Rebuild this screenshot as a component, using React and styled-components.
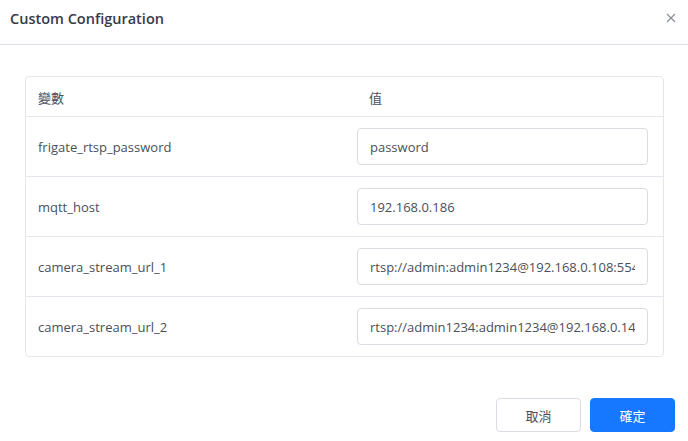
import React from "react"
import styled, { createGlobalStyle } from "styled-components"

const rows = [
  { name: "frigate_rtsp_password", value: "password" },
  { name: "mqtt_host", value: "192.168.0.186" },
  { name: "camera_stream_url_1", value: "rtsp://admin:admin1234@192.168.0.108:554/cam/realmonitor" },
  { name: "camera_stream_url_2", value: "rtsp://admin1234:admin1234@192.168.0.140:554/stream" },
]

const App = () => (
  <>
    <GlobalStyle />
    <Dialog>
      <Header>
        <Title>Custom Configuration</Title>
        <CloseButton aria-label="close">
          <svg width="10" height="10" viewBox="0 0 10 10">
            <path d="M1 1L9 9M9 1L1 9" stroke="#8a8f99" strokeWidth="1.2" fill="none" />
          </svg>
        </CloseButton>
      </Header>
      <Body>
        <Table>
          <HeadRow>
            <NameCell>變數</NameCell>
            <ValueCell head>值</ValueCell>
          </HeadRow>
          {rows.map((r) => (
            <Row key={r.name}>
              <NameCell>{r.name}</NameCell>
              <ValueCell>
                <Input defaultValue={r.value} />
              </ValueCell>
            </Row>
          ))}
        </Table>
      </Body>
      <Footer>
        <Button>取消</Button>
        <Button primary>確定</Button>
      </Footer>
    </Dialog>
  </>
)

const GlobalStyle = createGlobalStyle`
  body {
    margin: 0;
    background: #fff;
    font-family: "Open Sans", "Noto Sans CJK TC", sans-serif;
  }
`

const Dialog = styled.div`
  width: 688px;
  height: 441px;
  background: #fff;
  display: flex;
  flex-direction: column;
`

const Header = styled.div`
  height: 45px;
  border-bottom: 1px solid #dcdfe6;
  display: flex;
  align-items: center;
  justify-content: space-between;
  padding: 0 12px 0 10px;
  box-sizing: border-box;
`

const Title = styled.h1`
  margin: 0;
  font-size: 14.5px;
  font-weight: 600;
  color: #363b47;
  margin-top: -8px;
`

const CloseButton = styled.button`
  border: 0;
  background: none;
  padding: 0;
  display: flex;
  margin-top: -8px;
  cursor: pointer;
`

const Body = styled.div`
  padding: 31px 24px 0 25px;
`

const Table = styled.div`
  border: 1px solid #e4e7ed;
  border-radius: 4px;
`

const Row = styled.div`
  display: grid;
  grid-template-columns: 319px 1fr;
  height: 59px;
  align-items: center;
  border-top: 1px solid #e4e7ed;
`

const HeadRow = styled(Row)`
  height: 39px;
  border-top: 0;
  padding-top: 2px;
  box-sizing: border-box;
`

const NameCell = styled.div`
  padding-left: 12px;
  font-size: 13px;
  color: #4a4f5a;
`

const ValueCell = styled.div`
  padding: 0 15px 0 ${(p) => (p.head ? "24px" : "12px")};
  font-size: 13px;
  color: #4a4f5a;
`

const Input = styled.input`
  box-sizing: border-box;
  width: 100%;
  height: 37px;
  border: 1px solid #d9dce3;
  border-radius: 4px;
  padding: 0 12px;
  font-family: inherit;
  font-size: 13px;
  color: #4a4f5a;
  outline: none;
`

const Footer = styled.div`
  margin-top: auto;
  display: flex;
  justify-content: flex-end;
  gap: 9px;
  padding: 0 13px 9px 0;
`

const Button = styled.button`
  width: 85px;
  height: 34px;
  border-radius: 4px;
  font-family: inherit;
  font-size: 13px;
  cursor: pointer;
  border: 1px solid ${(p) => (p.primary ? "#1677ff" : "#d9dce3")};
  background: ${(p) => (p.primary ? "#1677ff" : "#fff")};
  color: ${(p) => (p.primary ? "#fff" : "#4a4f5a")};
`

export default App
